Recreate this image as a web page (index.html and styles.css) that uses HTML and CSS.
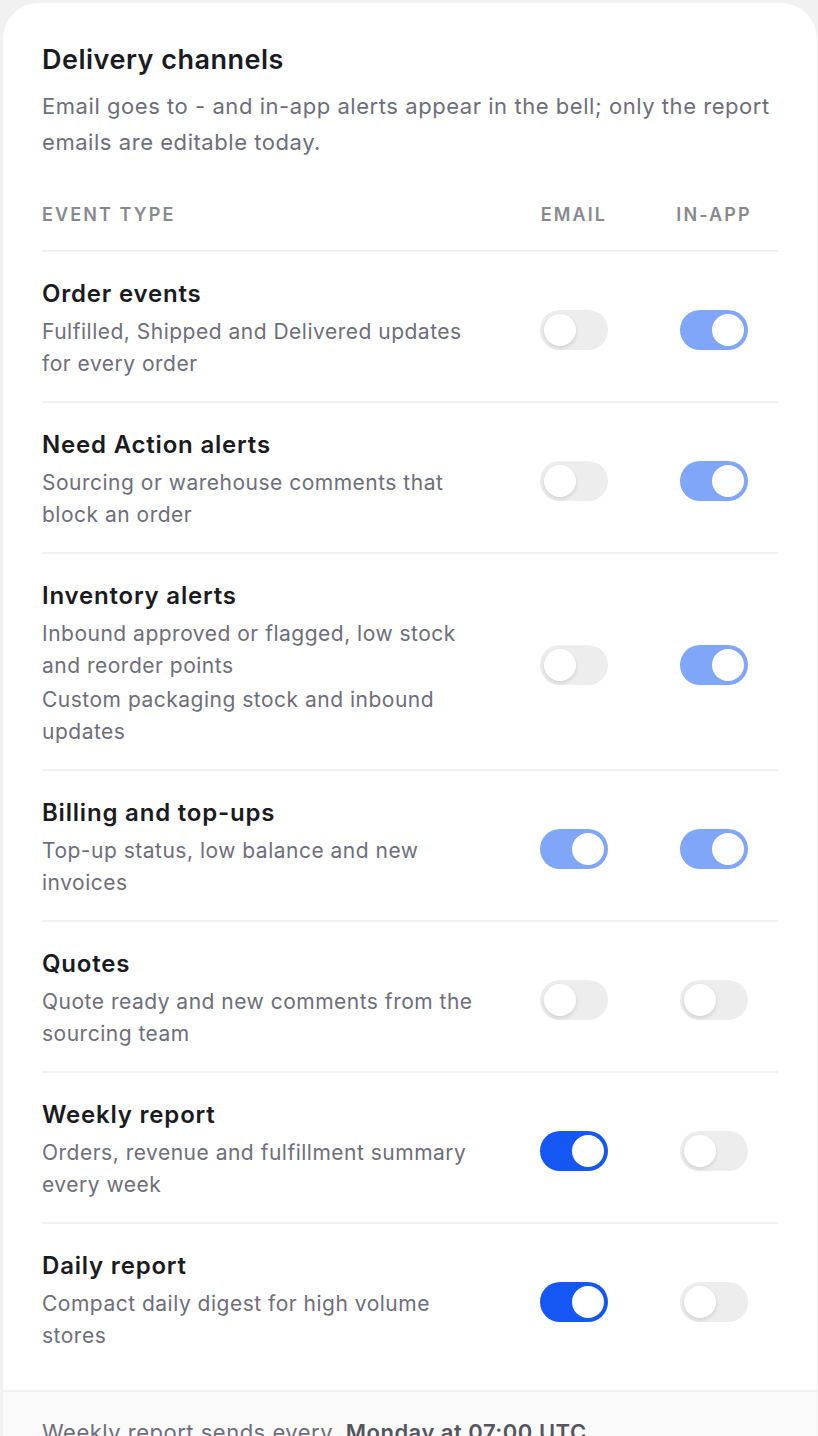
FILE: index.html
```html
<!DOCTYPE html>
<html lang="en">
<head>
    <meta charset="UTF-8">
    <meta name="viewport" content="width=device-width, initial-scale=1.0">
    <title>Delivery channels</title>
    <link rel="stylesheet" href="styles.css">
</head>
<body>

    <div class="card">
        <div class="card-body">
            <h2 class="title">Delivery channels</h2>
            <p class="lead">Email goes to - and in-app alerts appear in the bell; only the report emails are editable today.</p>

            <div class="grid head">
                <div>Event type</div>
                <div class="col">Email</div>
                <div class="col">In-app</div>
            </div>

            <div class="grid row">
                <div class="info">
                    <h3>Order events</h3>
                    <p>Fulfilled, Shipped and Delivered updates for every order</p>
                </div>
                <div class="col"><span class="toggle"></span></div>
                <div class="col"><span class="toggle on muted"></span></div>
            </div>

            <div class="grid row">
                <div class="info">
                    <h3>Need Action alerts</h3>
                    <p>Sourcing or warehouse comments that block an order</p>
                </div>
                <div class="col"><span class="toggle"></span></div>
                <div class="col"><span class="toggle on muted"></span></div>
            </div>

            <div class="grid row">
                <div class="info">
                    <h3>Inventory alerts</h3>
                    <p>Inbound approved or flagged, low stock and reorder points</p>
                    <p>Custom packaging stock and inbound updates</p>
                </div>
                <div class="col"><span class="toggle"></span></div>
                <div class="col"><span class="toggle on muted"></span></div>
            </div>

            <div class="grid row">
                <div class="info">
                    <h3>Billing and top-ups</h3>
                    <p>Top-up status, low balance and new invoices</p>
                </div>
                <div class="col"><span class="toggle on muted"></span></div>
                <div class="col"><span class="toggle on muted"></span></div>
            </div>

            <div class="grid row">
                <div class="info">
                    <h3>Quotes</h3>
                    <p>Quote ready and new comments from the sourcing team</p>
                </div>
                <div class="col"><span class="toggle"></span></div>
                <div class="col"><span class="toggle"></span></div>
            </div>

            <div class="grid row">
                <div class="info">
                    <h3>Weekly report</h3>
                    <p>Orders, revenue and fulfillment summary every week</p>
                </div>
                <div class="col"><span class="toggle on"></span></div>
                <div class="col"><span class="toggle"></span></div>
            </div>

            <div class="grid row last">
                <div class="info">
                    <h3>Daily report</h3>
                    <p>Compact daily digest for high volume stores</p>
                </div>
                <div class="col"><span class="toggle on"></span></div>
                <div class="col"><span class="toggle"></span></div>
            </div>
        </div>

        <!-- footer with schedule -->
        <div class="card-foot">
            Weekly report sends every <b>Monday at 07:00 UTC</b>
        </div>
    </div>

</body>
</html>
```

FILE: styles.css
```css
body {
    margin: 0;
    padding: 3px 1px 0 3px;
    background: #f1f1f2;
    font-family: 'Inter', 'Noto Sans', sans-serif;
    color: #1b1b1f;
}
.card {
    background: #fff;
    border-radius: 36px 36px 0 0;
    overflow: hidden;
}
.card-body {
    padding: 40px 39px 17px;
}
.title {
    margin: 0;
    font-size: 27px;
    font-weight: 600;
    line-height: 34px;
    letter-spacing: 0.5px;
}
.lead {
    margin: 11px 0 0;
    font-size: 22px;
    line-height: 36px;
    letter-spacing: 0.55px;
    color: #6e6e7a;
}
.grid {
    display: grid;
    grid-template-columns: 1fr 128px 128px;
    column-gap: 12px;
    align-items: center;
}
.col {
    text-align: center;
}
.head {
    margin-top: 43px;
    padding-bottom: 23px;
    border-bottom: 2px solid #f0f0f1;
    font-size: 18px;
    font-weight: 600;
    line-height: 24px;
    letter-spacing: 2.1px;
    text-transform: uppercase;
    color: #88888f;
}
.row {
    padding: 27px 0 21px;
    border-bottom: 2px solid #f2f2f3;
}
.row.last {
    border-bottom: none;
}
.info h3 {
    margin: 0 0 7px;
    font-size: 24px;
    font-weight: 600;
    line-height: 30px;
    letter-spacing: 0.8px;
}
.info p {
    margin: 0;
    max-width: 446px;
    font-size: 21px;
    line-height: 32px;
    letter-spacing: 0.5px;
    color: #6e6e7a;
}
.info p + p {
    margin-top: 2px;
}
.toggle {
    display: inline-block;
    position: relative;
    width: 68px;
    height: 40px;
    border-radius: 20px;
    background: #ededed;
    vertical-align: middle;
}
.toggle::after {
    content: "";
    position: absolute;
    top: 4px;
    left: 4px;
    width: 32px;
    height: 32px;
    border-radius: 50%;
    background: #fff;
    box-shadow: 0 2px 4px rgba(0, 0, 0, 0.12);
}
.toggle.on {
    background: #1557f5;
}
.toggle.on::after {
    left: 32px;
    box-shadow: none;
}
.toggle.on.muted {
    background: #7fa6f9;
}
.card-foot {
    border-top: 2px solid #f1f1f2;
    background: #fafafb;
    padding: 25px 39px 30px;
    font-size: 22px;
    line-height: 30px;
    letter-spacing: 0.5px;
    color: #6e6e7a;
}
.card-foot b {
    margin-left: 6px;
    font-weight: 600;
    color: #55555f;
}
```
